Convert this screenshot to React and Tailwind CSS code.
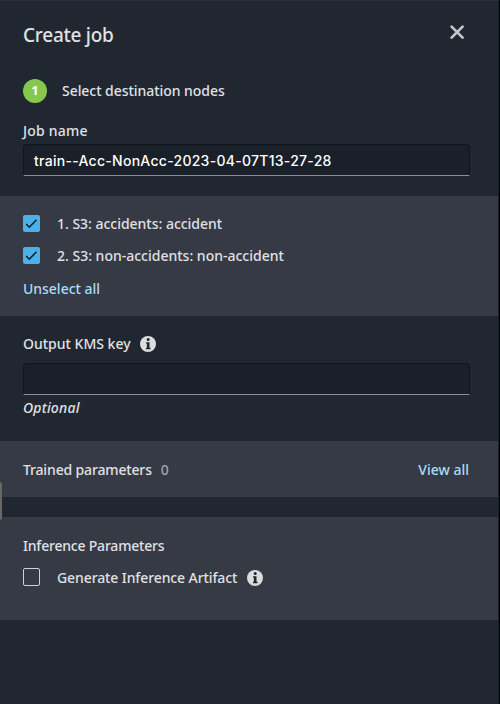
import React from "react";

function Label({ className = "", children }) {
  return (
    <span className={`whitespace-nowrap text-[14px] leading-5 font-medium ${className}`}>
      {children}
    </span>
  );
}

function InfoIcon() {
  return (
    <svg className="-mt-px h-4 w-4 shrink-0" viewBox="0 0 16 16">
      <circle cx="8" cy="8" r="8" fill="#dcdcde" />
      <circle cx="8.2" cy="3.6" r="1.5" fill="#20262f" />
      <path d="M6 6.2h3.5v5.6h1v1.4H6v-1.4h.9V7.6H6z" fill="#20262f" />
    </svg>
  );
}

function Checkbox({ checked }) {
  return checked ? (
    <span className="-mt-px flex h-[17px] w-[17px] shrink-0 rounded-[2px] bg-[#4cb0ea]">
      <svg className="h-[17px] w-[17px]" viewBox="0 0 17 17" fill="none">
        <path d="M3.2 9l3.1 3.2 7.2-7.5" stroke="#0f1a26" strokeWidth="1.5" />
      </svg>
    </span>
  ) : (
    <span className="-mt-0.5 h-[18px] w-[17px] shrink-0 rounded-[2px] border border-[#d0d2d6]" />
  );
}

function Field({ value }) {
  return (
    <div className="flex h-8 w-[447px] items-center rounded-t-[4px] border border-[#10141b] border-b-[#8a8d96] bg-[#1a2029] pl-2.5 font-['Inter',sans-serif] text-[14px] font-medium tracking-[0.28px] text-white">
      <span className="whitespace-nowrap">{value}</span>
    </div>
  );
}

export default function App() {
  return (
    <div className="h-[704px] w-[500px] overflow-hidden border-r border-black bg-[#212731] font-['Noto_Sans',sans-serif] text-[#e0e1e4]">
      <div className="relative flex h-full flex-col border-t border-r border-t-[#2b303a] border-r-[#1c202a]">
        <header className="flex h-[69px] shrink-0 items-start justify-between pr-[33px] pl-[23px]">
          <h1 className="mt-5 text-[19px] leading-7 font-medium tracking-[-0.25px]">Create job</h1>
          <svg className="mt-[23px] h-4 w-4" viewBox="0 0 16 16" fill="none">
            <path d="M2.6 2.6l11 11M13.6 2.6l-11 11" stroke="#c5c7cb" strokeWidth="2.7" strokeLinecap="round" />
          </svg>
        </header>
        <section className="flex h-[126px] shrink-0 flex-col pt-[9px] pl-[23px]">
          <div className="flex h-6 items-center gap-[15px]">
            <span className="flex h-6 w-6 items-center justify-center rounded-full bg-[#86c74e] text-[13px] font-bold text-white">1</span>
            <Label className="tracking-[-0.05px]">Select destination nodes</Label>
          </div>
          <Label className="mt-[18px] mb-[3px] tracking-[0.2px]">Job name</Label>
          <Field value="train--Acc-NonAcc-2023-04-07T13-27-28" />
        </section>
        <section className="flex h-[120px] shrink-0 flex-col bg-[#353a45] pt-3 pl-[23px]">
          <div className="flex h-8 items-center gap-[17px]">
            <Checkbox checked />
            <Label className="tracking-[-0.02px]">1. S3: accidents: accident</Label>
          </div>
          <div className="flex h-8 items-center gap-[17px]">
            <Checkbox checked />
            <Label>2. S3: non-accidents: non-accident</Label>
          </div>
          <Label className="mt-[7px] tracking-[-0.02px] text-[#a9dafb]">Unselect all</Label>
        </section>
        <section className="flex h-[125px] shrink-0 flex-col pt-[18px] pl-[23px]">
          <div className="flex h-5 items-center gap-[9px]">
            <Label>Output KMS key</Label>
            <InfoIcon />
          </div>
          <div className="mt-[9px]"><Field value="" /></div>
          <Label className="mt-[3px] tracking-[0.2px] italic">Optional</Label>
        </section>
        <section className="flex h-14 shrink-0 items-center bg-[#353a45] pt-0.5 pr-[29px] pl-[23px]">
          <Label className="tracking-[-0.15px]">Trained parameters</Label>
          <Label className="ml-[9px] text-[#a0a3aa]">0</Label>
          <Label className="ml-auto text-[#a9dafb]">View all</Label>
        </section>
        <section className="mt-5 flex h-[103px] shrink-0 flex-col bg-[#353a45] pt-[19px] pl-[23px]">
          <Label className="tracking-[-0.2px]">Inference Parameters</Label>
          <div className="mt-3 flex h-5 items-center">
            <Checkbox />
            <Label className="mr-2.5 ml-[17px] tracking-[-0.1px]">Generate Inference Artifact</Label>
            <InfoIcon />
          </div>
        </section>
        <span className="absolute top-[481px] left-0 h-[38px] w-[2px] rounded-r-sm bg-[#686765]" />
      </div>
    </div>
  );
}
